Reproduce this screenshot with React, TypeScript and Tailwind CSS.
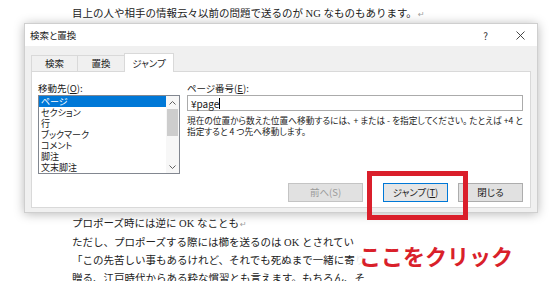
const ui = "font-['Noto_Sans_CJK_JP','Noto_Sans',sans-serif] [font-feature-settings:'palt']"
const doc = "font-['Liberation_Serif','Noto_Sans_CJK_JP',serif]"

function Mark() {
  return <span className="font-['DejaVu_Sans',sans-serif] text-[8px] text-[#a0a0a0] ml-[1px]">↵</span>
}

function Doc() {
  return (
    <div className={`${doc} pl-[72px] pt-[5px] text-[10.5px] leading-[18px] text-[#222] whitespace-nowrap`}>
      <div>目上の人や相手の情報云々以前の問題で送るのが NG なものもあります。<Mark /></div>
      <div className="mt-[191px]">プロポーズ時には逆に OK なことも<Mark /></div>
      <div>ただし、プロポーズする際には櫛を送るのは OK とされてい</div>
      <div>「この先苦しい事もあるけれど、それでも死ぬまで一緒に寄り</div>
      <div>贈る、江戸時代からある粋な慣習とも言えます。もちろん、そ</div>
    </div>
  )
}

const items = ["ページ", "セクション", "行", "ブックマーク", "コメント", "脚注", "文末脚注"]

function Chevron({ up }: { up?: boolean }) {
  return (
    <svg width="7" height="4" viewBox="0 0 7 4" className="text-[#606060]">
      <path d={up ? "M0.5 3.5 L3.5 0.5 L6.5 3.5" : "M0.5 0.5 L3.5 3.5 L6.5 0.5"} fill="none" stroke="currentColor" strokeWidth="1" />
    </svg>
  )
}

function Dialog() {
  return (
    <div className={`${ui} absolute left-[24px] top-[23px] w-[514px] h-[190px] bg-[#f0f0f0] border border-[#cfcfcf] shadow-[0_1px_10px_rgba(0,0,0,0.28)] flex flex-col text-[#1a1a1a]`}>
      <div className="h-[22px] bg-white flex items-center pl-[5px] pr-[12px] text-[9.5px]">
        <span>検索と置換</span>
        <span className="ml-auto mr-[28px] text-[10px] text-[#333]">?</span>
        <svg width="9" height="9" viewBox="0 0 9 9">
          <path d="M0.5 0.5 L8.5 8.5 M8.5 0.5 L0.5 8.5" stroke="#333" strokeWidth="0.9" />
        </svg>
      </div>
      <div className="flex-1 px-[6px] pt-[7px] pb-[4px] flex flex-col">
        <div className="flex items-end h-[18px] text-[9.5px]">
          <div className="w-[47px] h-[16px] border border-b-0 border-[#d9d9d9] flex items-center justify-center">検索</div>
          <div className="w-[48px] h-[16px] -ml-px border border-b-0 border-[#d9d9d9] flex items-center justify-center">置換</div>
          <div className="relative z-10 w-[50px] h-[19px] -ml-px -mb-px bg-white border border-b-0 border-[#d9d9d9] flex items-center justify-center">ジャンプ</div>
        </div>
        <div className="flex-1 bg-white border border-[#d9d9d9] flex flex-col pl-[6px] pr-[7px] pt-[10px] pb-[5px]">
          <div className="flex gap-[7px]">
            <div className="w-[143px]">
              <div className="h-[12px] leading-[12px] text-[9.5px]">移動先(<span className="underline">O</span>):</div>
              <div className="mt-[1px] h-[79px] border border-[#828790] flex">
                <div className="flex-1 text-[9px]">
                  {items.map((it, i) => (
                    <div key={it} className={`h-[11px] leading-[11px] pl-[2px] ${i === 0 ? "bg-[#0078d7] text-white" : ""}`}>{it}</div>
                  ))}
                </div>
                <div className="w-[13px] bg-[#f7f7f7] flex flex-col">
                  <div className="h-[13px] flex items-center justify-center"><Chevron up /></div>
                  <div className="h-[27px] mx-[1px] bg-[#cdcdcd]" />
                  <div className="flex-1" />
                  <div className="h-[13px] flex items-center justify-center"><Chevron /></div>
                </div>
              </div>
            </div>
            <div className="flex-1">
              <div className="h-[12px] leading-[12px] text-[9.5px]">ページ番号(<span className="underline">E</span>):</div>
              <div className="mt-[1px] h-[16px] border border-[#ababab] flex items-center pl-[3px] text-[10px]">
                <span>¥page</span>
                <span className="w-px h-[11px] bg-black" />
              </div>
              <div className="mt-[4px] text-[8.7px] leading-[11px] whitespace-nowrap">
                <div>現在の位置から数えた位置へ移動するには、 + または - を指定してください。 たとえば +4 と</div>
                <div>指定すると 4 つ先へ移動します。</div>
              </div>
            </div>
          </div>
          <div className="mt-auto flex justify-end text-[9.5px]">
            <div className="w-[75px] h-[19px] bg-[#e1e1e1] border border-[#c4c4c4] text-[#9a9a9a] flex items-center justify-center">前へ(S)</div>
            <div className="ml-[20px] w-[65px] h-[19px] bg-[#e5e5e5] border border-[#0078d7] flex items-center justify-center">ジャンプ(<span className="underline">T</span>)</div>
            <div className="ml-[10px] w-[65px] h-[19px] bg-[#e1e1e1] border border-[#adadad] flex items-center justify-center">閉じる</div>
          </div>
        </div>
      </div>
    </div>
  )
}

export default function App() {
  return (
    <div className="relative w-[550px] h-[281px] overflow-hidden bg-white">
      <Doc />
      <Dialog />
      <div className="absolute left-[367px] top-[171px] w-[101px] h-[49px] border-[5px] border-[#da1f2b]" />
      <div className="absolute left-[356px] top-[238px] w-[172px] h-[33px] bg-white/90 flex items-center pl-[3px] font-['Noto_Sans_CJK_JP',sans-serif] font-bold text-[22px] leading-none text-[#d9202a]">
        ここをクリック
      </div>
    </div>
  )
}
